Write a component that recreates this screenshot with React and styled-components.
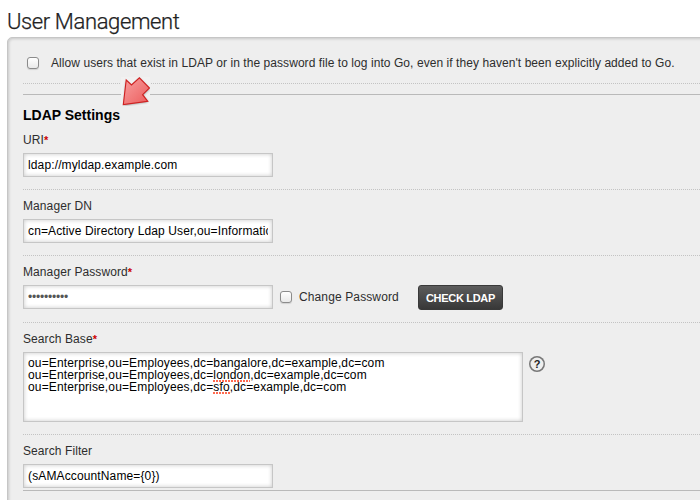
import React from "react";
import styled, { createGlobalStyle } from "styled-components";

const GlobalStyle = createGlobalStyle`
  * { box-sizing: border-box; }
  body {
    margin: 0;
    background: #fff;
    color: #2d2d2d;
    overflow: hidden;
    font: 12px/16px "Liberation Sans", Arial, sans-serif;
  }
  input, textarea, button { font-family: inherit; margin: 0; }
`;

const Page = styled.main`
  height: 500px;
  overflow: hidden;
  padding-left: 7px;
`;

const Title = styled.h1`
  margin: 0;
  height: 37px;
  padding-top: 7px;
  color: #222;
  font: 300 22px/29px Roboto, "Liberation Sans", sans-serif;
  letter-spacing: -0.38px;
  -webkit-text-stroke: 0.25px #222;
  white-space: nowrap;
`;

const Panel = styled.section`
  position: relative;
  width: 710px;
  height: 480px;
  padding-left: 15px;
  border: 1px solid #c6c6c6;
  border-radius: 5px;
  background: #eee;
  box-shadow: inset 1px 1px 3px rgba(0, 0, 0, 0.16);
`;

const AllowRow = styled.label`
  display: flex;
  align-items: center;
  height: 46px;
  padding: 4px 0 0 4px;
  gap: 12px;
  border-bottom: 1px dotted #c3c3c3;
  white-space: nowrap;
`;

const Text = styled.span`
  letter-spacing: ${(p) => p.$spacing || "0"};
`;

const Checkbox = styled.input.attrs({ type: "checkbox" })`
  appearance: none;
  flex: none;
  width: 12px;
  height: 12px;
  border: 1px solid #8b8b8b;
  border-radius: 3px;
  background: linear-gradient(#fff, #e9e9e9);
  box-shadow: 0 1px 1px rgba(0, 0, 0, 0.12);
`;

const Settings = styled.div`
  margin-top: 10px;
  border-top: 1px solid #b9b9b9;
  border-bottom: 1px solid #b9b9b9;
  height: 397px;
`;

const Heading = styled.h2`
  margin: 0;
  height: 36px;
  padding-top: 12px;
  color: #000;
  font: bold 14px/16px "Liberation Sans", Arial, sans-serif;
`;

const Field = styled.div`
  height: ${(p) => p.$height}px;
  padding-top: ${(p) => p.$top}px;
  border-bottom: ${(p) => (p.$last ? "none" : "1px dotted #c3c3c3")};
`;

const Label = styled.label`
  display: block;
  height: 21px;
  letter-spacing: 0.09px;
`;

const Star = styled.span`
  color: #c00;
  font-size: 11px;
  font-weight: bold;
`;

const Controls = styled.div`
  display: flex;
  align-items: flex-start;
`;

const Input = styled.input`
  display: block;
  width: 250px;
  height: 24px;
  padding: 0 4px;
  border: 1px solid #c6c6c6;
  border-radius: 0;
  outline: 0;
  background: #fff;
  box-shadow: inset 0 0 4px rgba(0, 0, 0, 0.22);
  color: ${(p) => (p.type === "password" ? "#555" : "#000")};
  font-size: 12px;
  letter-spacing: ${(p) => (p.type === "password" ? "-0.2px" : "0.13px")};
`;

const Area = styled.div`
  width: 500px;
  height: 70px;
  padding: 4px 4px;
  border: 1px solid #c6c6c6;
  background: #fff;
  box-shadow: inset 0 0 4px rgba(0, 0, 0, 0.22);
  color: #000;
  line-height: 12px;
  letter-spacing: 0.14px;
  white-space: nowrap;
`;

const Line = styled.div`
  height: 12px;
`;

const Misspelled = styled.span`
  background: repeating-linear-gradient(90deg, #ff6a50 0 2px, transparent 2px 3px) 0 100% / 100% 2px no-repeat;
`;

const ChangeOption = styled.label`
  display: flex;
  align-items: center;
  gap: 7px;
  height: 24px;
  margin-left: 7px;
  width: 138px;
  white-space: nowrap;
`;

const CheckButton = styled.button`
  width: 85px;
  height: 25px;
  padding: 0;
  border: 1px solid #393939;
  border-radius: 3px;
  background: linear-gradient(#5c5c5c, #383838);
  color: #fff;
  font-size: 11px;
  font-weight: bold;
  letter-spacing: -0.3px;
  white-space: nowrap;
`;

const Help = styled.span`
  display: flex;
  align-items: center;
  justify-content: center;
  width: 16px;
  height: 16px;
  margin: 4px 0 0 6px;
  border-radius: 50%;
  box-shadow: inset 0 0 0 1.5px #777;
  color: #222;
  font-size: 11px;
  font-weight: bold;
  line-height: 12px;
`;

const Pointer = styled.svg`
  position: absolute;
  left: 113px;
  top: 39px;
`;

const base = "ou=Enterprise,ou=Employees,dc=";

export default function App() {
  return (
    <>
      <GlobalStyle />
      <Page>
        <Title>User Management</Title>
        <Panel>
          <AllowRow>
            <Checkbox />
            <Text $spacing="0.065px">
              Allow users that exist in LDAP or in the password file to log into Go, even if they haven't been
              explicitly added to Go.
            </Text>
          </AllowRow>
          <Settings>
            <Heading>LDAP Settings</Heading>
            <Field $height={59} $top={1}>
              <Label>URI<Star>*</Star></Label>
              <Input defaultValue="ldap://myldap.example.com" />
            </Field>
            <Field $height={66} $top={8}>
              <Label>Manager DN</Label>
              <Input defaultValue="cn=Active Directory Ldap User,ou=Information Systems" />
            </Field>
            <Field $height={67} $top={8}>
              <Label>Manager Password<Star>*</Star></Label>
              <Controls>
                <Input type="password" defaultValue="abcdefghij" />
                <ChangeOption>
                  <Checkbox />
                  <Text $spacing="0.12px">Change Password</Text>
                </ChangeOption>
                <CheckButton>CHECK LDAP</CheckButton>
              </Controls>
            </Field>
            <Field $height={112} $top={8}>
              <Label>Search Base<Star>*</Star></Label>
              <Controls>
                <Area>
                  <Line>{base}bangalore,dc=example,dc=com</Line>
                  <Line>{base}<Misspelled>london</Misspelled>,dc=example,dc=com</Line>
                  <Line>{base}<Misspelled>sfo</Misspelled>,dc=example,dc=com</Line>
                </Area>
                <Help>?</Help>
              </Controls>
            </Field>
            <Field $height={55} $top={8} $last>
              <Label>Search Filter</Label>
              <Input defaultValue="(sAMAccountName={0})" />
            </Field>
          </Settings>
          <Pointer width="29" height="29" viewBox="0 0 29 29">
            <defs>
              <linearGradient id="pointerFill" x1="0" y1="0" x2="1" y2="1">
                <stop offset="0" stopColor="#f8a0a0" />
                <stop offset="1" stopColor="#ec5b5b" />
              </linearGradient>
              <filter id="pointerShadow" x="-30%" y="-30%" width="160%" height="160%">
                <feGaussianBlur stdDeviation="1.3" />
              </filter>
            </defs>
            <rect width="29" height="29" fill="#f1f1f1" />
            <path d="M5 4L10.500 9L18.500 1.500L28.500 12L22 18.500L27 25L3 28.500Z" fill="#000" opacity=".4" filter="url(#pointerShadow)" />
            <path d="M5.200 3L10.500 8L18.400 .8L28.500 11L21.600 17.700L26.800 24.400L2.300 27.600Z" fill="url(#pointerFill)" stroke="#cf2020" strokeWidth="1.1" />
          </Pointer>
        </Panel>
      </Page>
    </>
  );
}
